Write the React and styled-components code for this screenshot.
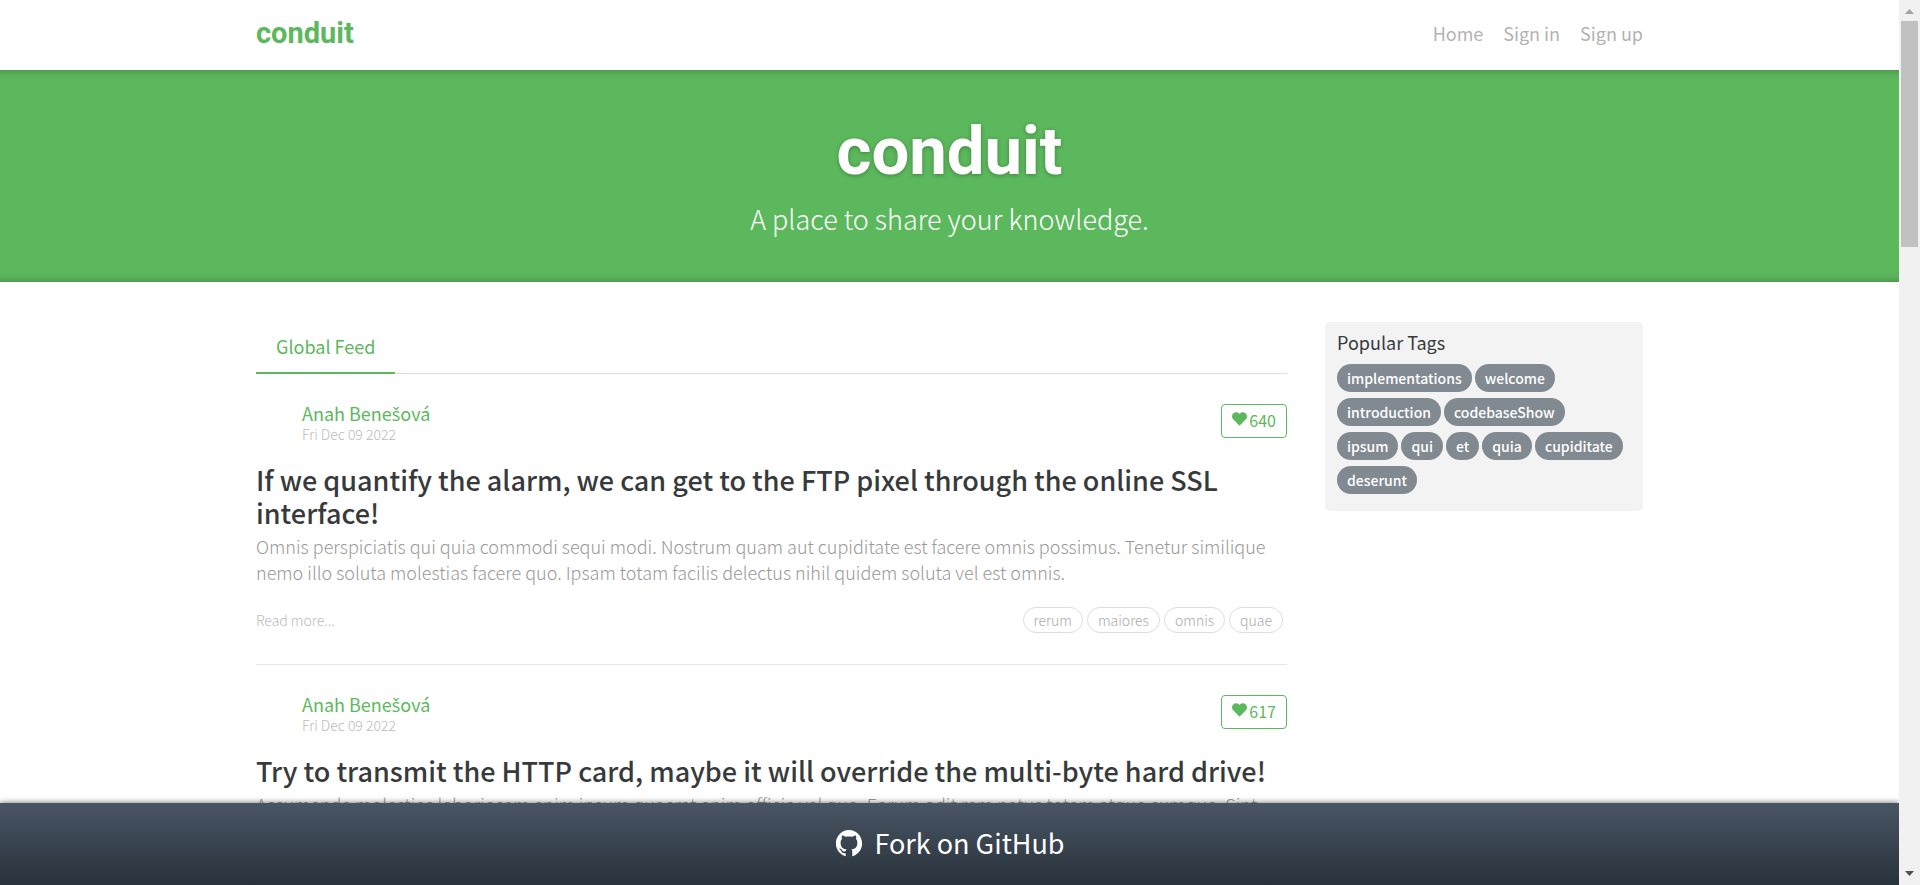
import React from "react";
import styled, { createGlobalStyle } from "styled-components";
import { IoLogoGithub } from "react-icons/io";

const GlobalStyle = createGlobalStyle`
  *, *::before, *::after { box-sizing: border-box; }
  body {
    margin: 0;
    background: #fff;
    color: #373a3c;
    font-family: "Noto Sans CJK SC", "Open Sans", sans-serif;
    font-size: 18px;
    line-height: 26px;
  }
  a { color: inherit; text-decoration: none; }
  h1, h2, p, ul { margin: 0; padding: 0; }
  ul { list-style: none; }
`;

const green = "#5cb85c";

const Shell = styled.div`
  display: flex;
  height: 100vh;
`;

const Page = styled.div`
  flex: 1;
  min-width: 0;
  display: flex;
  flex-direction: column;
`;

const Scroller = styled.div`
  flex: 1;
  min-height: 0;
  overflow-y: auto;
  scrollbar-width: none;
`;

const Container = styled.div`
  width: 100%;
  max-width: 1427px;
  margin: 0 auto;
  padding: 0 20px;
`;

const NavBar = styled(Container).attrs({ as: "nav" })`
  display: flex;
  align-items: center;
  justify-content: space-between;
  height: 70px;
  padding-bottom: 4px;
`;

const Brand = styled.a`
  color: ${green};
  font-family: Roboto, sans-serif;
  font-size: 29px;
  font-weight: 700;
`;

const NavList = styled.ul`
  display: flex;
  gap: 20px;
  color: #b3b3b3;
`;

const Banner = styled.header`
  padding: 40px 20px 42px;
  background: ${green};
  color: #fff;
  text-align: center;
  box-shadow: inset 0 10px 10px -10px rgba(0, 0, 0, 0.3),
    inset 0 -10px 10px -10px rgba(0, 0, 0, 0.3);
`;

const BannerTitle = styled.h1`
  margin-bottom: 6px;
  font-family: Roboto, sans-serif;
  font-size: 67px;
  font-weight: 700;
  line-height: 82px;
  text-shadow: 0 1px 4px rgba(0, 0, 0, 0.3);
`;

const Tagline = styled.p`
  font-size: 27px;
  font-weight: 300;
  line-height: 42px;
`;

const Columns = styled(Container).attrs({ as: "main" })`
  display: grid;
  grid-template-columns: minmax(0, 1fr) 318px;
  align-items: start;
  gap: 38px;
  padding-top: 40px;
`;

const Tabs = styled.div`
  display: flex;
  border-bottom: 1px solid #ddd;
`;

const Tab = styled.a`
  margin-bottom: -1px;
  padding: 0 20px 2px;
  border-bottom: 2px solid ${green};
  color: ${green};
  line-height: 48px;
`;

const Article = styled.article`
  padding: 30px 0 31px;
  border-top: 1px solid #e5e5e5;

  &:first-of-type { border-top: 0; }
`;

const Meta = styled.div`
  display: flex;
  align-items: flex-start;
  justify-content: space-between;
  height: 40px;
  margin-bottom: 19px;
`;

const Author = styled.div`
  display: flex;
  flex-direction: column;
  gap: 2px;
  padding-left: 46px;
`;

const AuthorName = styled.a`
  color: ${green};
  line-height: 18px;
`;

const Caron = styled.span`
  font-family: "Open Sans", sans-serif;
`;

const PostDate = styled.span`
  color: #bbb;
  font-size: 14px;
  font-weight: 300;
  line-height: 18px;
`;

const LikeButton = styled.button`
  display: flex;
  align-items: center;
  gap: 2px;
  height: 34px;
  padding: 0 10px 2px;
  border: 1px solid ${green};
  border-radius: 4px;
  background: #fff;
  color: ${green};
  font: inherit;
  font-size: 16px;
  line-height: 30px;
`;

const Heart = styled.svg`
  width: 15px;
  height: 14px;
  margin-bottom: 2px;
  fill: currentColor;
`;

const Title = styled.h2`
  margin-bottom: 4px;
  font-size: 27px;
  font-weight: 500;
  line-height: 33px;
`;

const Summary = styled.p`
  color: #999;
  font-weight: 300;
`;

const ArticleFooter = styled.div`
  display: flex;
  align-items: center;
  justify-content: space-between;
  margin-top: 22px;
  font-size: 14px;
  font-weight: 300;
`;

const ReadMore = styled.a`
  color: #bbb;
`;

const TagList = styled.ul`
  display: flex;
  flex-wrap: wrap;
  gap: 6px 3px;
`;

const ArticleTags = styled(TagList)`
  column-gap: 4px;
  margin-right: 4px;
`;

const OutlineTag = styled.li`
  padding: 0 10px;
  border: 1px solid #ddd;
  border-radius: 13px;
  color: #aaa;
  line-height: 24px;
`;

const Sidebar = styled.aside`
  padding: 6px 16px 17px 12px;
  border-radius: 5px;
  background: #f3f3f3;
`;

const SidebarTitle = styled.p`
  margin-bottom: 8px;
  line-height: 28px;
`;

const PillTag = styled.a`
  display: block;
  padding: 0 10px;
  border-radius: 14px;
  background: #818a91;
  color: #fff;
  font-size: 14px;
  font-weight: 500;
  line-height: 28px;
`;

const ForkBar = styled.a`
  position: relative;
  display: flex;
  align-items: center;
  justify-content: center;
  gap: 10px;
  height: 82px;
  padding-bottom: 2px;
  background: linear-gradient(#485563, #29323c);
  box-shadow: 0 0 6px rgba(0, 0, 0, 0.6);
  color: #fff;
  font-size: 27px;
`;

const ScrollTrack = styled.div`
  position: relative;
  display: flex;
  flex-direction: column;
  align-items: center;
  width: 21px;
  background: #f1f1f1;
`;

const ScrollArrow = styled.svg`
  width: 21px;
  height: 21px;
  fill: ${(p) => p.$color};
`;

const ScrollThumb = styled.div`
  width: 17px;
  height: 226px;
  margin-bottom: auto;
  background: #c1c1c1;
`;

const articles = [
  {
    likes: 640,
    title:
      "If we quantify the alarm, we can get to the FTP pixel through the online SSL interface!",
    summary:
      "Omnis perspiciatis qui quia commodi sequi modi. Nostrum quam aut cupiditate est facere omnis possimus. Tenetur similique nemo illo soluta molestias facere quo. Ipsam totam facilis delectus nihil quidem soluta vel est omnis.",
    tags: ["rerum", "maiores", "omnis", "quae"],
  },
  {
    likes: 617,
    title: "Try to transmit the HTTP card, maybe it will override the multi-byte hard drive!",
    summary:
      "Assumenda molestias laboriosam enim ipsum quaerat enim officia vel quo. Earum odit rem natus totam atque cumque. Sint",
    tags: [],
  },
];

const popularTags = [
  "implementations", "welcome", "introduction", "codebaseShow", "ipsum",
  "qui", "et", "quia", "cupiditate", "deserunt",
];

function ArticlePreview({ article }) {
  return (
    <Article>
      <Meta>
        <Author>
          <AuthorName href="#author">Anah Bene<Caron>š</Caron>ová</AuthorName>
          <PostDate>Fri Dec 09 2022</PostDate>
        </Author>
        <LikeButton type="button">
          <Heart viewBox="64 83 384 346" aria-hidden="true">
            <path d="M340.800 83C307 83 276 98.800 256 124.800c-20-26-51-41.800-84.800-41.800C112.100 83 64 131.300 64 190.700c0 27.900 10.600 54.400 29.900 74.600L245.100 418l10.900 11 10.900-11 148.300-149.800c21-20.300 32.800-47.900 32.800-77.500C448 131.300 399.900 83 340.800 83z" />
          </Heart>
          {article.likes}
        </LikeButton>
      </Meta>
      <Title>{article.title}</Title>
      <Summary>{article.summary}</Summary>
      <ArticleFooter>
        <ReadMore href="#article">Read more...</ReadMore>
        <ArticleTags>
          {article.tags.map((tag) => (
            <OutlineTag key={tag}>{tag}</OutlineTag>
          ))}
        </ArticleTags>
      </ArticleFooter>
    </Article>
  );
}

export default function App() {
  return (
    <>
      <GlobalStyle />
      <Shell>
        <Page>
          <Scroller>
            <NavBar>
              <Brand href="#home">conduit</Brand>
              <NavList>
                <li><a href="#home">Home</a></li>
                <li><a href="#login">Sign in</a></li>
                <li><a href="#register">Sign up</a></li>
              </NavList>
            </NavBar>
            <Banner>
              <BannerTitle>conduit</BannerTitle>
              <Tagline>A place to share your knowledge.</Tagline>
            </Banner>
            <Columns>
              <section>
                <Tabs>
                  <Tab href="#feed">Global Feed</Tab>
                </Tabs>
                {articles.map((article) => (
                  <ArticlePreview key={article.likes} article={article} />
                ))}
              </section>
              <Sidebar>
                <SidebarTitle>Popular Tags</SidebarTitle>
                <TagList>
                  {popularTags.map((tag) => (
                    <li key={tag}><PillTag href="#tag">{tag}</PillTag></li>
                  ))}
                </TagList>
              </Sidebar>
            </Columns>
          </Scroller>
          <ForkBar href="#github">
            <IoLogoGithub size={30} aria-hidden="true" />
            Fork on GitHub
          </ForkBar>
        </Page>
        <ScrollTrack aria-hidden="true">
          <ScrollArrow viewBox="0 0 21 21" $color="#a3a3a3">
            <path d="M6 14h9l-4.500-5z" />
          </ScrollArrow>
          <ScrollThumb />
          <ScrollArrow viewBox="0 0 21 21" $color="#505050">
            <path d="M6 7h9l-4.500 5z" />
          </ScrollArrow>
        </ScrollTrack>
      </Shell>
    </>
  );
}
